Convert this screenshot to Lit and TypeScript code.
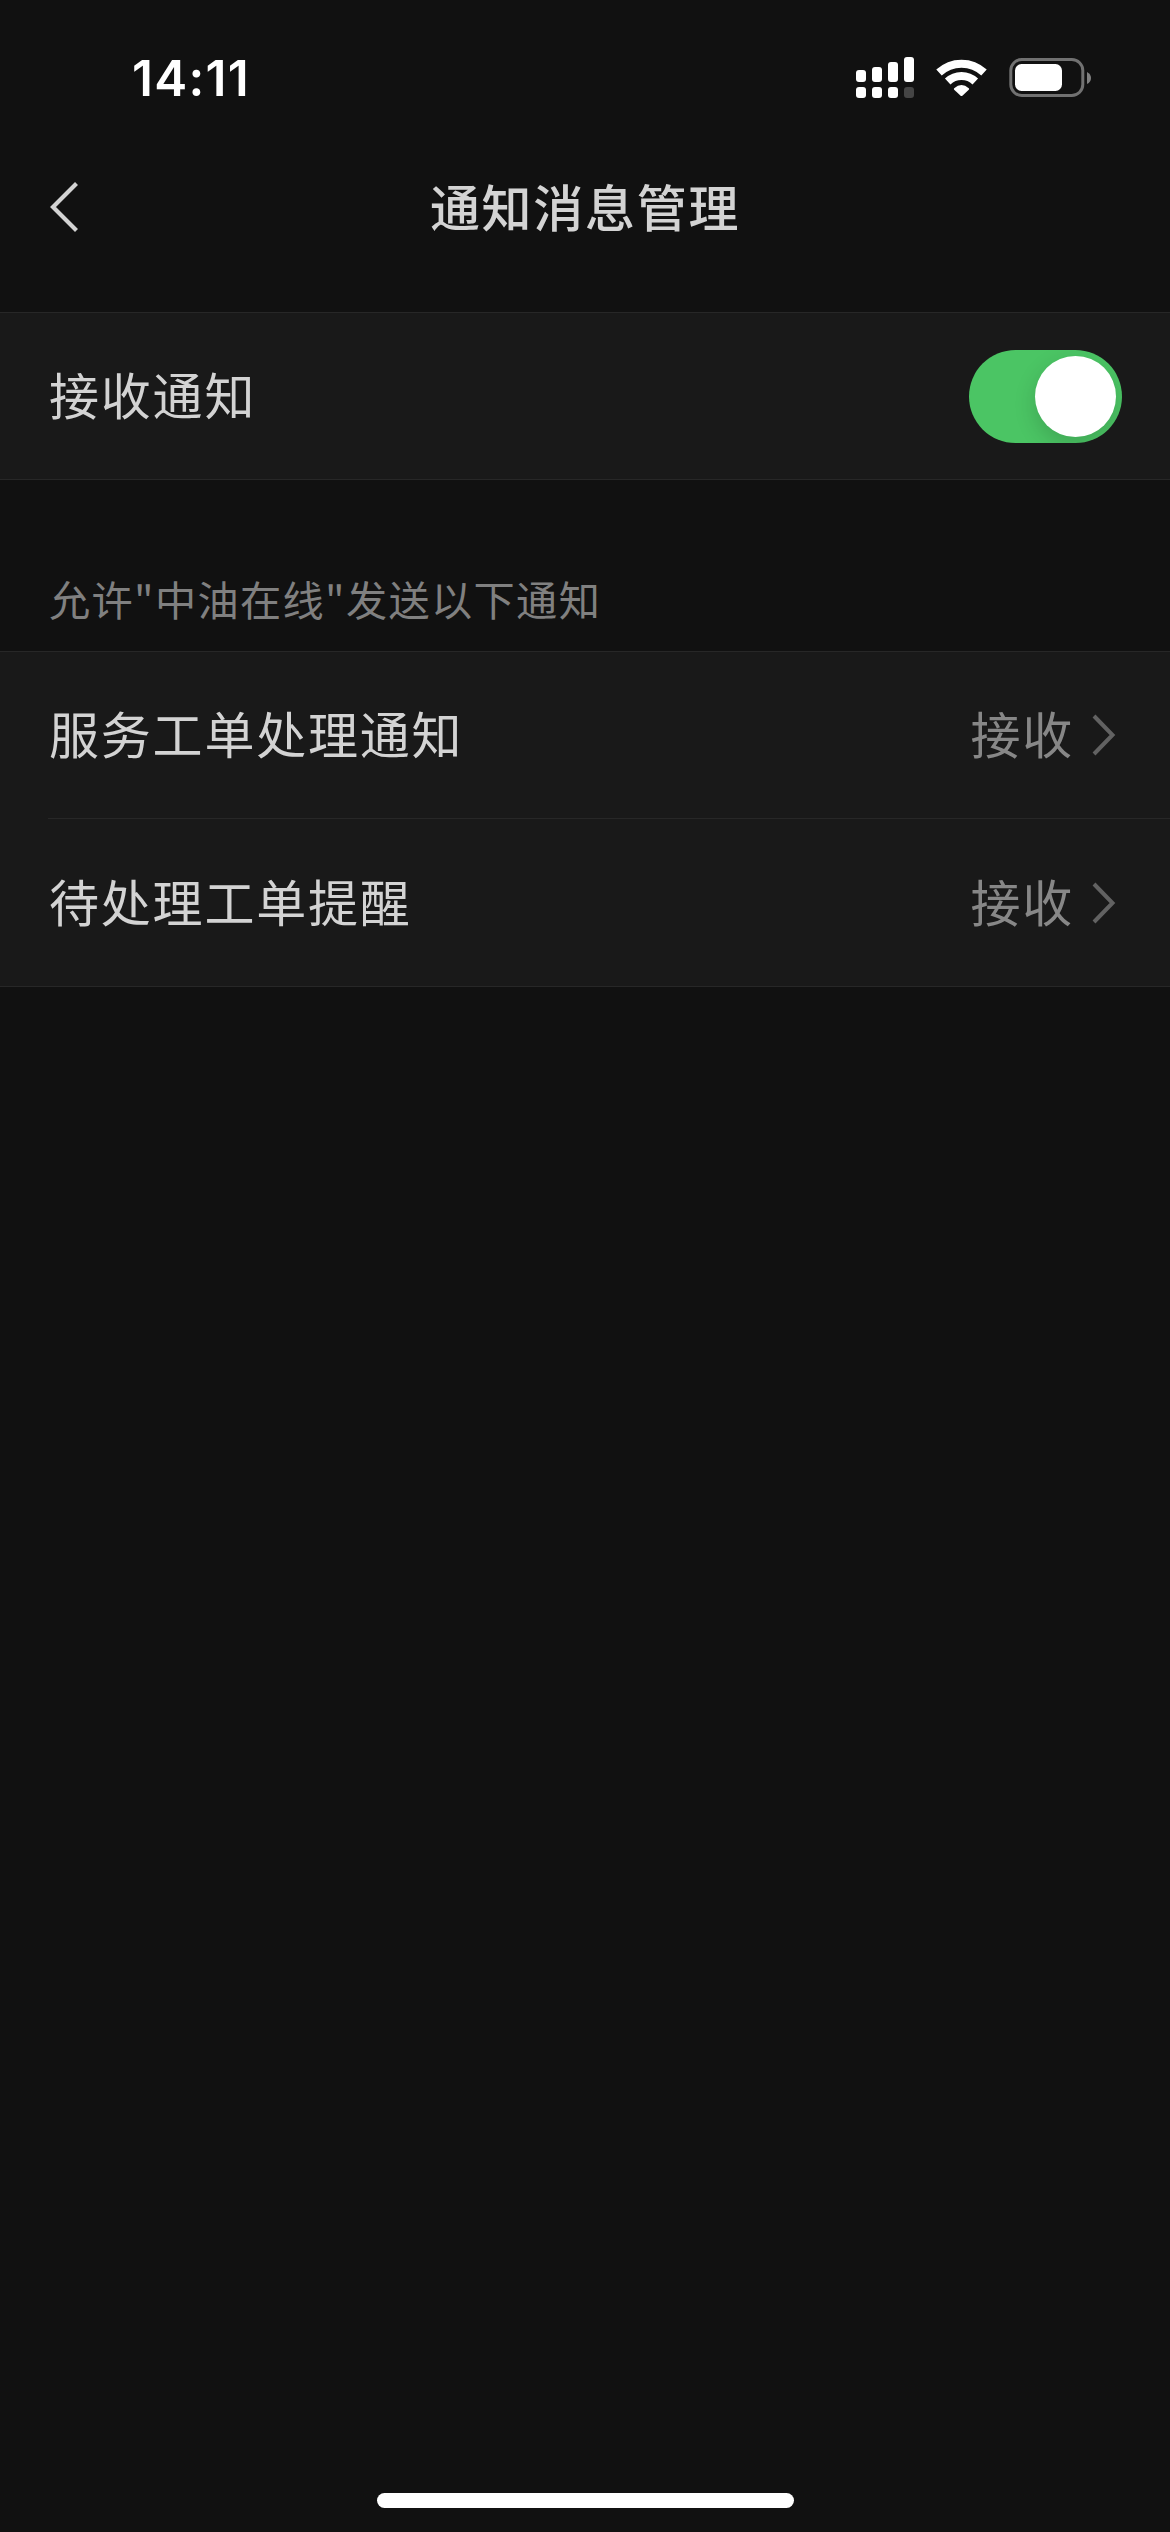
import { LitElement, html, css, svg } from "lit";
import { customElement, property, state } from "lit/decorators.js";

@customElement("status-bar")
class StatusBar extends LitElement {
  static styles = css`
    :host {
      display: flex;
      justify-content: space-between;
      align-items: center;
      height: 156px;
      padding: 0 78px 0 132px;
      box-sizing: border-box;
    }
    .time {
      font: 600 49.5px/60px Inter, "Liberation Sans", sans-serif;
      letter-spacing: 1.3px;
      color: #fff;
    }
    .icons {
      display: block;
      width: 240px;
      height: 60px;
    }
  `;

  render() {
    const bars = [
      { x: 4, top: 22 },
      { x: 20, top: 19 },
      { x: 36, top: 14 },
      { x: 52, top: 9 },
    ];
    return html`
      <span class="time">14:11</span>
      <svg class="icons" viewBox="0 0 240 60" fill="#fff">
        ${bars.map(
          (b, i) => svg`
            <rect x=${b.x} y=${b.top} width="10" height=${34 - b.top} rx="3"></rect>
            <rect x=${b.x} y="39" width="10" height="11" rx="3"
              fill=${i === 3 ? "#454545" : "#fff"}></rect>`
        )}
        <g fill="none" stroke="#fff" stroke-width="8">
          <path d="M87 24.5 A33 33 0 0 1 132 24.5"></path>
          <path d="M95.7 33.5 A20 20 0 0 1 123.3 33.5"></path>
        </g>
        <path d="M102.2 40.2 Q109.5 33.8 116.8 40.2 Q117.6 41 116.8 41.8 L110.4 47.7 Q109.5 48.5 108.6 47.7 L102.2 41.8 Q101.4 41 102.2 40.2Z"></path>
        <rect x="158.8" y="11.5" width="72" height="36" rx="11" fill="none" stroke="#717171" stroke-width="3"></rect>
        <rect x="163" y="16" width="47" height="27" rx="6.5"></rect>
        <path d="M235 24 Q239 26 239 30 Q239 34 235 36Z" fill="#808080"></path>
      </svg>
    `;
  }
}

@customElement("nav-header")
class NavHeader extends LitElement {
  @property() heading = "";
  static styles = css`
    :host {
      display: grid;
      grid-template-columns: 100px 1fr 100px;
      align-items: center;
      height: 104px;
      color: #d3d3d3;
    }
    .back {
      display: block;
      width: 100px;
      height: 104px;
    }
    .title {
      margin: 0;
      padding-bottom: 7px;
      text-align: center;
      font-size: 50px;
      font-weight: 500;
      line-height: 72px;
      letter-spacing: 1.7px;
    }
  `;

  render() {
    return html`
      <svg class="back" viewBox="0 0 100 104" fill="none" stroke="currentColor" stroke-width="4.2">
        <path d="M76.5 27.5 L53 51 L76.5 74.5"></path>
      </svg>
      <h1 class="title">${this.heading}</h1>
    `;
  }
}

@customElement("toggle-switch")
class ToggleSwitch extends LitElement {
  @property({ type: Boolean }) on = false;
  static styles = css`
    .track {
      display: flex;
      align-items: center;
      width: 153px;
      height: 93px;
      padding: 0 6px;
      border: 0;
      border-radius: 47px;
      box-sizing: border-box;
      background: #4a4a4a;
      overflow: hidden;
    }
    .on {
      justify-content: flex-end;
      background: #4bc564;
    }
    .knob {
      width: 81px;
      height: 81px;
      border-radius: 50%;
      background: #fff;
      box-shadow: 0 8px 22px rgba(0, 0, 0, 0.16);
    }
  `;

  render() {
    return html`<button
      class="track ${this.on ? "on" : ""}"
      role="switch"
      aria-checked=${this.on}
      @click=${() => (this.on = !this.on)}
    >
      <span class="knob"></span>
    </button>`;
  }
}

@customElement("setting-row")
class SettingRow extends LitElement {
  @property() label = "";
  @property() value = "";
  static styles = css`
    :host {
      display: flex;
      align-items: center;
      height: 166px;
      padding-right: 48px;
      font-size: 50px;
      line-height: 72px;
      letter-spacing: 1.8px;
    }
    .label {
      flex: 1;
      padding: 0 0 6px 1px;
      color: #d3d3d3;
    }
    .value {
      padding-bottom: 6px;
      color: #878787;
    }
    .arrow {
      width: 48px;
      height: 60px;
      color: #626262;
    }
  `;

  render() {
    return html`
      <span class="label">${this.label}</span>
      ${this.value
        ? html`<span class="value">${this.value}</span>
            <svg class="arrow" viewBox="2 0 48 60" fill="none" stroke="currentColor" stroke-width="4">
              <path d="M22 11 L40.5 30 L22 49"></path>
            </svg>`
        : html`<slot></slot>`}
    `;
  }
}

@customElement("app-root")
class AppRoot extends LitElement {
  @state() private rows = [
    { label: "服务工单处理通知", value: "接收" },
    { label: "待处理工单提醒", value: "接收" },
  ];

  static styles = css`
    :host {
      display: flex;
      flex-direction: column;
      height: 2532px;
      background: #111;
      font-family: "Noto Sans CJK SC", sans-serif;
    }
    .group {
      background: #191919;
      border-top: 1px solid #272727;
      border-bottom: 1px solid #272727;
      padding-left: 48px;
    }
    .first {
      margin-top: 52px;
    }
    .row + .row {
      height: 167px;
      border-top: 1px solid #272727;
    }
    .caption {
      margin: 88px 48px 23px 49px;
      font-size: 41.2px;
      line-height: 60px;
      letter-spacing: 1.35px;
      color: #808080;
    }
    .home {
      width: 417px;
      height: 15px;
      margin: auto auto 24px;
      border-radius: 8px;
      background: #fff;
    }
  `;

  render() {
    return html`
      <status-bar></status-bar>
      <nav-header heading="通知消息管理"></nav-header>
      <section class="group first">
        <setting-row label="接收通知"><toggle-switch on></toggle-switch></setting-row>
      </section>
      <p class="caption">允许"中油在线"发送以下通知</p>
      <section class="group">
        ${this.rows.map(
          (r) => html`<setting-row class="row" label=${r.label} value=${r.value}></setting-row>`
        )}
      </section>
      <div class="home"></div>
    `;
  }
}
